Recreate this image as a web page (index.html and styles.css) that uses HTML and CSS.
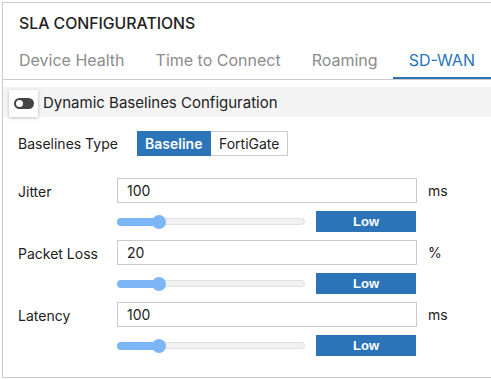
FILE: index.html
```html
<!DOCTYPE html>
<html lang="en">

<head>
    <meta charset="UTF-8">
    <meta name="viewport" content="width=device-width, initial-scale=1.0">
    <title>SLA Configurations</title>
    <link rel="stylesheet" href="styles.css">
</head>

<body>
    <div class="card">
        <h1 class="card-title">SLA Configurations</h1>

        <div class="tabs">
            <div class="tab">Device Health</div>
            <div class="tab">Time to Connect</div>
            <div class="tab">Roaming</div>
            <div class="tab active">SD-WAN</div>
        </div>

        <div class="toggle-row">
            <button class="toggle-btn"><span class="toggle-pill"><span class="toggle-knob"></span></span></button>
            <span class="toggle-label">Dynamic Baselines Configuration</span>
        </div>

        <div class="content">
            <div class="type-row">
                <span class="field-label">Baselines Type</span>
                <div class="btn-group">
                    <button class="seg-btn active">Baseline</button>
                    <button class="seg-btn">FortiGate</button>
                </div>
            </div>

            <div class="field">
                <span class="field-label">Jitter</span>
                <input class="field-input" type="text" value="100">
                <span class="unit">ms</span>
                <div class="slider">
                    <div class="slider-fill" style="width: 42px;"></div>
                    <div class="slider-thumb"></div>
                    <div class="slider-rest"></div>
                </div>
                <button class="level-btn">Low</button>
            </div>

            <div class="field">
                <span class="field-label">Packet Loss</span>
                <input class="field-input" type="text" value="20">
                <span class="unit">%</span>
                <div class="slider">
                    <div class="slider-fill" style="width: 42px;"></div>
                    <div class="slider-thumb"></div>
                    <div class="slider-rest"></div>
                </div>
                <button class="level-btn">Low</button>
            </div>

            <div class="field">
                <span class="field-label">Latency</span>
                <input class="field-input" type="text" value="100">
                <span class="unit">ms</span>
                <div class="slider">
                    <div class="slider-fill" style="width: 42px;"></div>
                    <div class="slider-thumb"></div>
                    <div class="slider-rest"></div>
                </div>
                <button class="level-btn">Low</button>
            </div>
        </div>
    </div>
</body>

</html>
```

FILE: styles.css
```css
:root {
    --primary: #2b74b8;
    --slider: #7db6f7;
    --border: #cccccc;
    --text: #222222;
    --muted: #8c8c8c;
}

* {
    margin: 0;
    padding: 0;
    box-sizing: border-box;
    font-family: Inter, 'Noto Sans', sans-serif;
}

body {
    background: #fff;
    overflow: hidden;
}

.card {
    margin: 2px 0 0 2px;
    height: 376px;
    border: 1px solid var(--border);
    border-right: none;
}

.card-title {
    padding: 10px 16px 0;
    font-size: 15.8px;
    line-height: 22px;
    font-weight: 500;
    text-transform: uppercase;
    color: var(--text);
}

.tabs {
    display: flex;
    margin-top: 10px;
    border-bottom: 1px solid var(--border);
}

.tab {
    padding: 4px 15px 8px 16px;
    font-size: 16px;
    line-height: 22px;
    color: var(--muted);
    cursor: pointer;
}

.tab.active {
    padding-right: 16px;
    color: var(--primary);
    box-shadow: inset 0 -2px 0 var(--primary);
}

.toggle-row {
    display: flex;
    align-items: center;
    gap: 5px;
    margin-top: 7px;
    height: 30px;
    padding-left: 6px;
    background: #f4f4f4;
}

.toggle-btn {
    display: flex;
    align-items: center;
    justify-content: center;
    width: 29px;
    height: 27px;
    margin-top: 2px;
    background: #fff;
    border: none;
    box-shadow: 0 1px 3px rgba(0, 0, 0, 0.25);
    cursor: pointer;
}

.toggle-pill {
    display: flex;
    align-items: center;
    width: 20px;
    height: 11px;
    padding-left: 2px;
    border-radius: 6px;
    background: #444;
}

.toggle-knob {
    width: 7px;
    height: 7px;
    border-radius: 50%;
    background: #fff;
}

.toggle-label {
    font-size: 15px;
    color: var(--text);
}

.content {
    padding: 14px 15px 0;
}

.field-label {
    font-size: 14px;
    color: var(--text);
}

.type-row {
    display: grid;
    grid-template-columns: 119px auto;
    align-items: center;
    margin-bottom: 22px;
}

.btn-group {
    display: flex;
}

.seg-btn {
    height: 25px;
    padding: 0 8px;
    font-size: 14px;
    background: #fff;
    color: var(--text);
    border: 1px solid var(--border);
    border-left: none;
    cursor: pointer;
}

.seg-btn.active {
    width: 74px;
    background: var(--primary);
    border-color: var(--primary);
    color: #fff;
    font-weight: 600;
}

.field {
    display: grid;
    grid-template-columns: 99px 188px 11px 101px auto;
    grid-template-rows: 25px 21px;
    row-gap: 8px;
    align-items: center;
    margin-bottom: 8px;
}

.field .field-label {
    margin-top: 2px;
}

.field-input {
    grid-column: 2 / 5;
    height: 25px;
    padding: 0 9px;
    font-size: 14px;
    color: var(--text);
    border: 1px solid var(--border);
    outline: none;
}

.unit {
    padding-left: 11px;
    font-size: 14px;
    color: var(--text);
}

.slider {
    grid-column: 2;
    display: flex;
    align-items: center;
}

.slider-fill {
    height: 8px;
    border-radius: 4px 0 0 4px;
    background: var(--slider);
}

.slider-thumb {
    position: relative;
    z-index: 1;
    flex: none;
    width: 14px;
    height: 14px;
    margin-left: -7px;
    border-radius: 50%;
    background: var(--slider);
}

.slider-rest {
    flex: 1;
    height: 7px;
    margin-left: -7px;
    border-radius: 0 4px 4px 0;
    background: #f1f1f1;
    border: 1px solid #e0e0e0;
}

.level-btn {
    grid-column: 4;
    width: 100px;
    height: 21px;
    background: var(--primary);
    color: #fff;
    border: none;
    font-family: 'Liberation Sans', Arial, sans-serif;
    font-size: 13px;
    font-weight: bold;
    cursor: pointer;
}
```
